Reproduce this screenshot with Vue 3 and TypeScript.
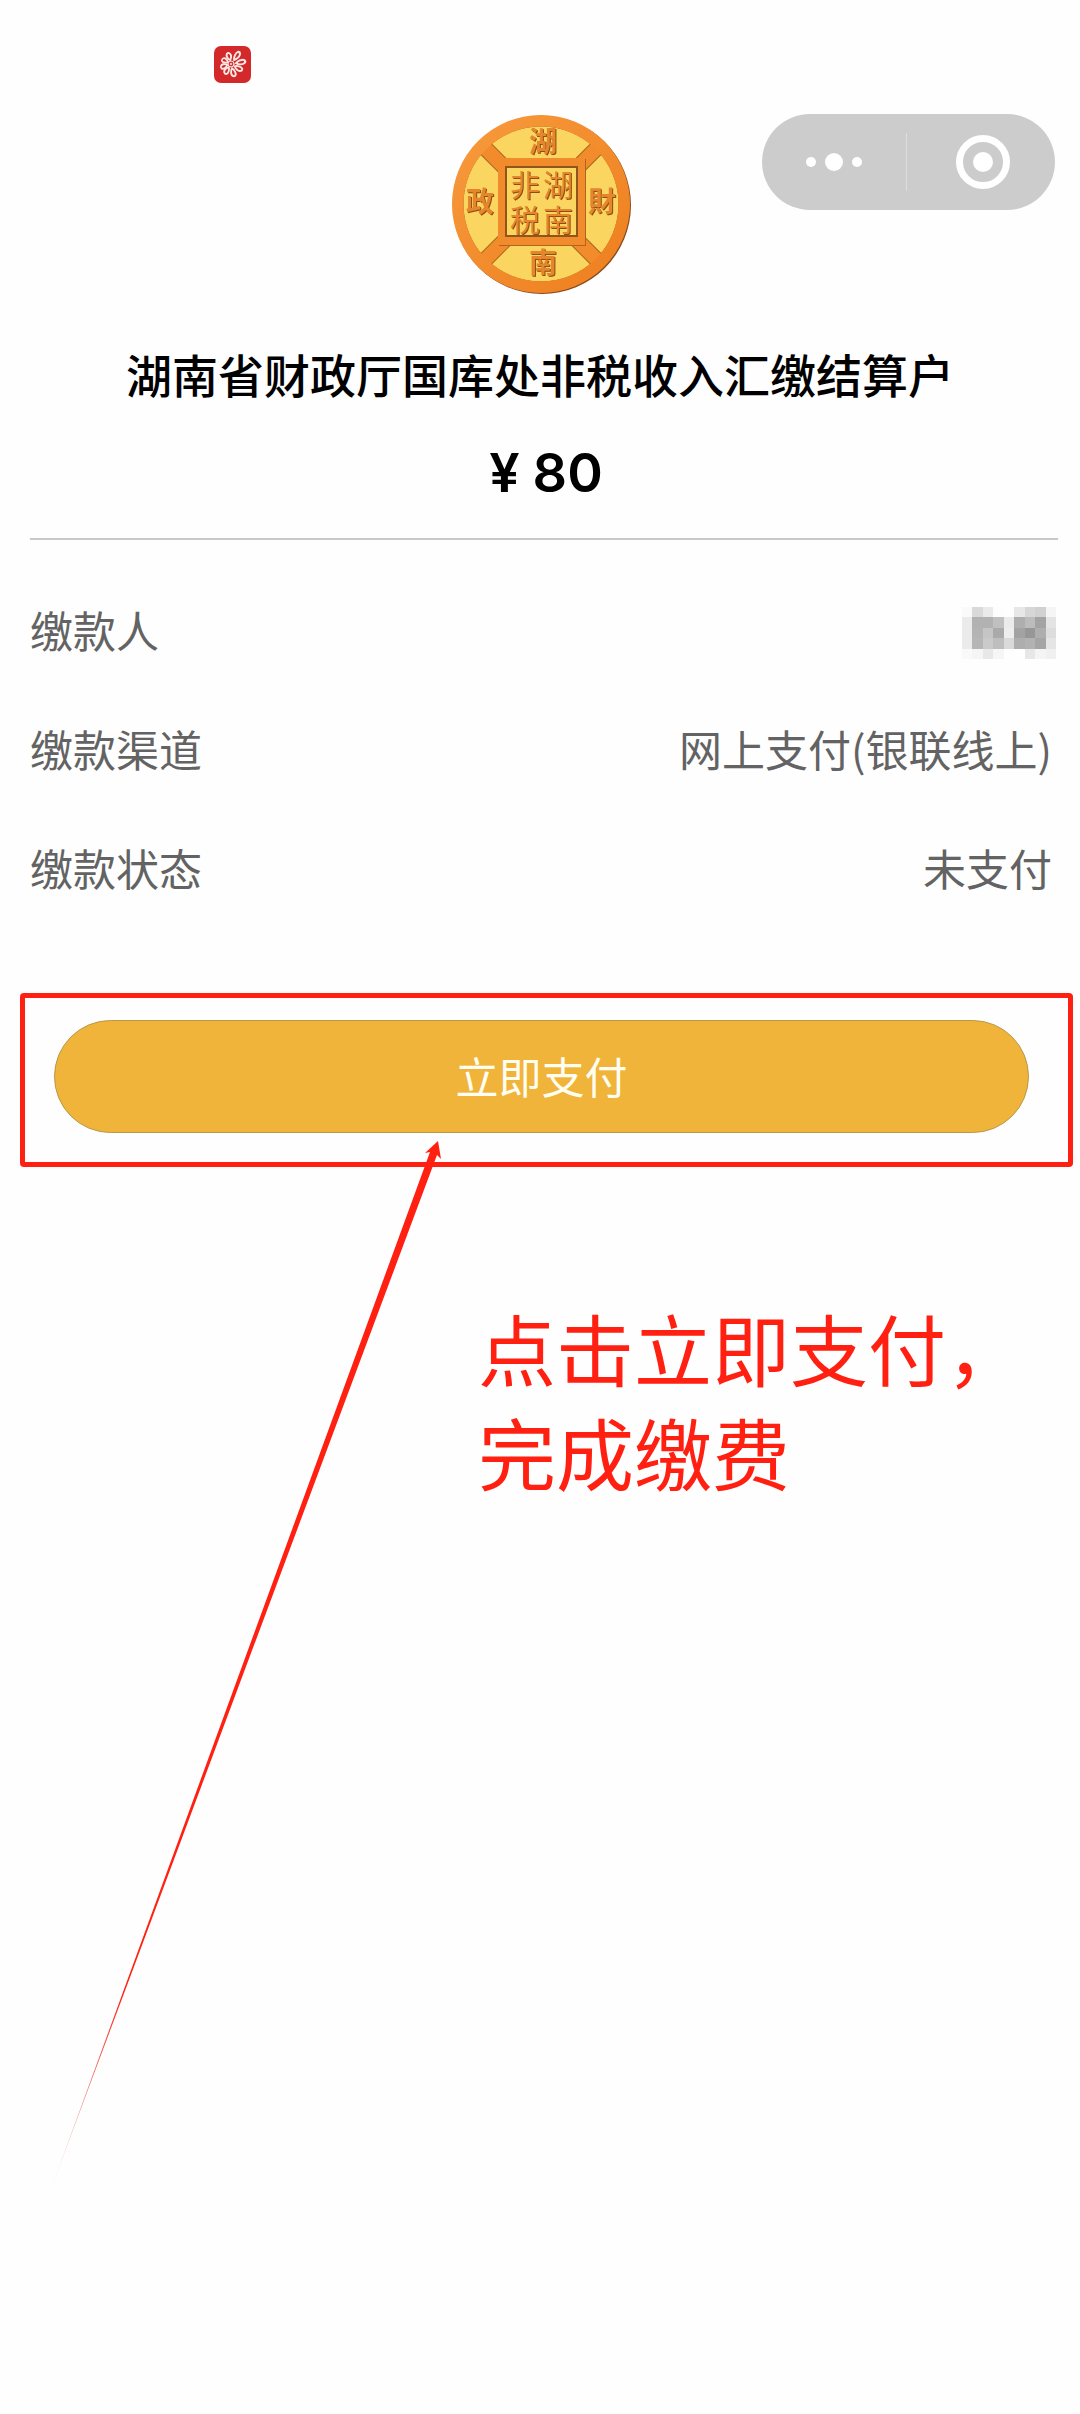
<script setup lang="ts">
interface Row {
  label: string
  value?: string
}

const rows: Row[] = [
  { label: '缴款人' },
  { label: '缴款渠道', value: '网上支付(银联线上)' },
  { label: '缴款状态', value: '未支付' },
]

// Grey levels of the pixelated payer name, row by row
const mosaic: number[][] = [
  [250, 217, 234, 253, 254, 231, 215, 209, 245],
  [235, 178, 178, 192, 235, 174, 188, 163, 228],
  [235, 180, 197, 170, 238, 163, 151, 174, 221],
  [235, 182, 202, 190, 218, 174, 178, 165, 229],
  [249, 245, 232, 246, 254, 254, 231, 244, 240],
]

// Angle and length of each petal of the app logo
const petals = [
  { angle: -8, length: 1.15 },
  { angle: 32, length: 1 },
  { angle: 78, length: 1 },
  { angle: 125, length: 0.9 },
  { angle: 165, length: 0.85 },
  { angle: 212, length: 0.8 },
  { angle: 258, length: 0.9 },
  { angle: 308, length: 1.15 },
]
</script>

<template>
  <main class="page">
    <div class="status">
      <svg class="app-icon" viewBox="0 0 37 37" aria-hidden="true">
        <rect width="37" height="37" rx="7" fill="#d3292b" />
        <g transform="translate(17 18)" fill="none" stroke="#fbe9e6">
          <circle r="3" stroke-width="1.2" />
          <circle r="0.8" stroke-width="1" />
          <path
            v-for="p in petals"
            :key="p.angle"
            :transform="`rotate(${p.angle}) scale(${p.length} 1)`"
            d="M4.5 0C6 -2 10 -3.4 12 -2C13.6 0 11.5 1.8 9 1.8C7 1.6 5.5 1 4.5 0Z"
            stroke-width="1.9"
          />
        </g>
      </svg>
    </div>

    <header class="top">
      <svg class="coin" viewBox="0 0 180 180" role="img" aria-label="湖南财政">
        <defs>
          <linearGradient id="rim" x1="0" y1="0" x2="1" y2="1">
            <stop offset="0" stop-color="#f79a3c" />
            <stop offset="1" stop-color="#ee7f1f" />
          </linearGradient>
        </defs>
        <circle cx="91" cy="91" r="89" fill="#8a4a1c" />
        <circle cx="90" cy="90" r="89" fill="url(#rim)" />
        <circle cx="90" cy="90" r="78" fill="#fad55f" stroke="#a8651f" stroke-width="1" />
        <path d="M32 32L148 148M148 32L32 148" stroke="#a8651f" stroke-width="16" />
        <path d="M30 30L150 150M150 30L30 150" stroke="#f28b2b" stroke-width="14" />
        <circle cx="90" cy="90" r="83" fill="none" stroke="url(#rim)" stroke-width="11" />
        <rect x="48" y="45" width="87" height="87" fill="#b0641f" />
        <rect x="47" y="44" width="87" height="87" fill="#f28b2b" />
        <rect x="55" y="53" width="71" height="69" fill="#fad55f" stroke="#8e551d" stroke-width="2" />
        <g class="coin-text">
          <text x="92" y="38">湖</text>
          <text x="92" y="159">南</text>
          <text x="29" y="98">政</text>
          <text x="151" y="98">財</text>
          <g class="seal">
            <text x="74" y="82">非</text>
            <text x="107" y="82">湖</text>
            <text x="74" y="117">税</text>
            <text x="107" y="117">南</text>
          </g>
        </g>
      </svg>
      <div class="capsule">
        <button type="button" aria-label="更多">
          <svg width="58" height="20" viewBox="0 0 58 20" fill="#fff">
            <circle cx="6" cy="10" r="5" />
            <circle cx="29" cy="10" r="9" />
            <circle cx="52" cy="10" r="5" />
          </svg>
        </button>
        <button type="button" aria-label="关闭">
          <svg width="56" height="56" viewBox="0 0 56 56">
            <circle cx="28" cy="28" r="23.5" fill="none" stroke="#fff" stroke-width="7" />
            <circle cx="28" cy="28" r="10" fill="#fff" />
          </svg>
        </button>
      </div>
    </header>

    <h1>湖南省财政厅国库处非税收入汇缴结算户</h1>
    <p class="amount"><span>¥</span><span>80</span></p>

    <dl>
      <div v-for="row in rows" :key="row.label" class="row">
        <dt>{{ row.label }}</dt>
        <dd v-if="row.value">{{ row.value }}</dd>
        <dd v-else class="masked">
          <svg viewBox="0 0 9 5" preserveAspectRatio="none" shape-rendering="crispEdges" aria-hidden="true">
            <template v-for="(line, y) in mosaic" :key="y">
              <rect
                v-for="(g, x) in line"
                :key="x"
                :x="x"
                :y="y"
                width="1"
                height="1"
                :fill="`rgb(${g},${g},${g})`"
              />
            </template>
          </svg>
        </dd>
      </div>
    </dl>

    <div class="highlight">
      <button type="button" class="pay">立即支付</button>
    </div>

    <section class="note">
      <svg class="arrow" viewBox="0 0 400 1050" aria-hidden="true">
        <defs>
          <linearGradient id="fade" gradientUnits="userSpaceOnUse" x1="1" y1="1050" x2="75" y2="850">
            <stop offset="0" stop-color="#c8201c" stop-opacity="0.1" />
            <stop offset="1" stop-color="#ff2012" />
          </linearGradient>
        </defs>
        <path d="M1 1049L380 12L375 13L388 1L391 19L387 15Z" fill="url(#fade)" />
      </svg>
      <p>点击立即支付，<br />完成缴费</p>
    </section>
  </main>
</template>

<style>
body {
  margin: 0;
  background: #fefefe;
}
</style>

<style scoped>
.page {
  position: relative;
  overflow: hidden;
  min-height: 100vh;
  background: #fefefe;
  color: #000;
  font-family: "Noto Sans CJK SC", sans-serif;
}
.status {
  display: flex;
  padding: 46px 0 31px 214px;
}
.app-icon {
  width: 37px;
  height: 37px;
}
.top {
  display: grid;
  grid-template-columns: 1fr auto 1fr;
  align-items: start;
  padding: 0 25px 0 26px;
}
.coin {
  grid-column: 2;
  width: 180px;
  height: 180px;
  display: block;
}
.coin-text {
  font-family: "Noto Sans CJK TC", sans-serif;
  font-size: 28px;
  font-weight: 700;
  text-anchor: middle;
  fill: #e5852c;
  filter: drop-shadow(1px 1px 0 #8e4d14);
}
.seal {
  font-size: 30px;
  font-weight: 400;
}
.capsule {
  justify-self: end;
  display: flex;
  width: 293px;
  height: 96px;
  border-radius: 48px;
  background: #ccc;
}
.capsule button {
  flex: 1;
  display: flex;
  align-items: center;
  justify-content: center;
  padding: 0;
  border: 0;
  background: none;
}
.capsule button + button {
  padding-left: 6px;
  position: relative;
}
.capsule button + button::before {
  content: "";
  position: absolute;
  left: 0;
  top: 19px;
  bottom: 19px;
  width: 1px;
  background: #dedede;
}
h1 {
  margin: 49px 0 0;
  font-size: 46px;
  line-height: 60px;
  font-weight: 500;
  text-align: center;
  white-space: nowrap;
}
.amount {
  display: flex;
  justify-content: center;
  gap: 13px;
  margin: 35px 22px 0 30px;
  padding: 0 0 30px 4px;
  border-bottom: 2px solid #c8c8c8;
  font-family: Inter, sans-serif;
  font-size: 54px;
  line-height: 70px;
  font-weight: 600;
}
dl {
  margin: 59px 28px 0 30px;
  display: flex;
  flex-direction: column;
  gap: 59px;
  font-size: 43px;
  line-height: 60px;
  color: #636363;
}
.row {
  display: flex;
  justify-content: space-between;
}
dd {
  margin: 0;
}
.masked {
  display: flex;
  align-items: flex-end;
  margin-right: -4px;
}
.masked svg {
  width: 94px;
  height: 52px;
}
.highlight {
  margin: 96px 7px 0 20px;
  padding: 22px 39px 29px 29px;
  border: 5px solid #ff2012;
  border-radius: 4px;
}
.pay {
  display: block;
  width: 100%;
  height: 113px;
  padding: 0 0 4px;
  border: 1px solid #b8984a;
  border-radius: 57px;
  background: #f0b43b;
  color: #fffef0;
  font-family: inherit;
  font-size: 43px;
  line-height: 60px;
}
.note {
  position: relative;
  padding: 128px 0 0 478px;
}
.note p {
  margin: 0;
  color: #ff2012;
  font-size: 78px;
  line-height: 104px;
}
.arrow {
  position: absolute;
  left: 50px;
  top: -27px;
  width: 400px;
  height: 1050px;
}
</style>
